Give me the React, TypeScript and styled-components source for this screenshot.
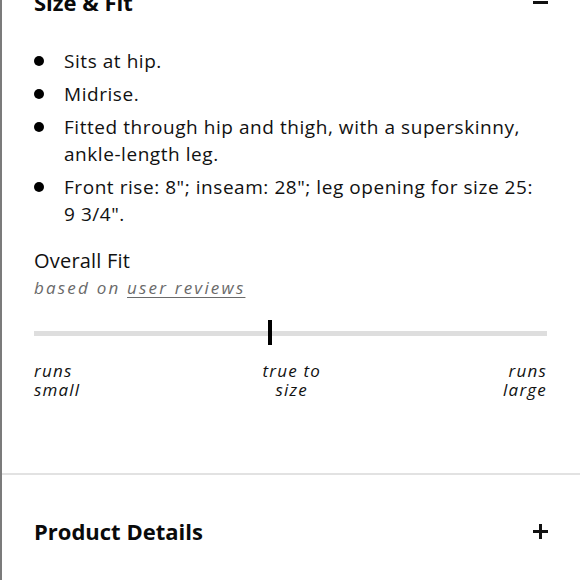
import React from "react";
import styled, { createGlobalStyle } from "styled-components";

const Global = createGlobalStyle`
  html, body { margin: 0; padding: 0; background: #fff; }
  body { font-family: "Open Sans", "Noto Sans", sans-serif; color: #111; overflow: hidden; }
`;

const Frame = styled.div`
  border-left: 2px solid #7b7b7b;
  min-height: 620px;
  margin-top: -21px;
  box-sizing: border-box;
`;

const Section = styled.section`
  padding: 0;
`;

const Header = styled.div`
  display: flex;
  align-items: center;
  justify-content: space-between;
  padding: 0 32px 0 32px;
  height: 46px;
`;

const Title = styled.h2`
  margin: 0;
  font-size: 22px;
  font-weight: 700;
  letter-spacing: 0;
  color: #0a0a0a;
`;

const Toggle = styled.span`
  position: relative;
  width: 15px;
  height: 15px;
  display: inline-block;
`;

const Bar = styled.span<{ $vertical?: boolean }>`
  position: absolute;
  background: #111;
  ${(p) =>
    p.$vertical
      ? "left: 6px; top: 0; width: 3px; height: 15px;"
      : "left: 0; top: 6px; width: 15px; height: 3px;"}
`;

const List = styled.ul`
  list-style: none;
  margin: 23px 0 0 0;
  padding: 0 36px 0 32px;
  display: flex;
  flex-direction: column;
  gap: 6px;
`;

const Item = styled.li`
  position: relative;
  padding-left: 30px;
  font-size: 19px;
  line-height: 27px;
  letter-spacing: 0.55px;
  color: #111;
  &::before {
    content: "";
    position: absolute;
    left: 0;
    top: 8px;
    width: 10px;
    height: 10px;
    border-radius: 50%;
    background: #000;
  }
`;

const FitBlock = styled.div`
  padding: 0 33px 0 32px;
  margin-top: 18px;
`;

const FitTitle = styled.div`
  font-size: 20px;
  line-height: 29px;
  letter-spacing: 0.2px;
  color: #111;
`;

const FitSub = styled.div`
  font-size: 17px;
  line-height: 26px;
  font-style: italic;
  letter-spacing: 2.2px;
  color: #6a6a6a;
  a {
    color: #6a6a6a;
    text-decoration: underline;
    text-underline-offset: 3px;
  }
`;

const Track = styled.div`
  position: relative;
  margin-top: 30px;
  height: 5px;
  background: #dedede;
`;

const Marker = styled.span`
  position: absolute;
  top: -11px;
  width: 4px;
  height: 25px;
  background: #000;
  transform: translateX(-50%);
`;

const Labels = styled.div`
  display: flex;
  justify-content: space-between;
  margin-top: 25px;
`;

const Label = styled.div<{ $align: "left" | "center" | "right" }>`
  font-size: 17px;
  line-height: 19px;
  font-style: italic;
  letter-spacing: 1.2px;
  color: #111;
  text-align: ${(p) => p.$align};
`;

const Divider = styled.hr`
  border: none;
  border-top: 2px solid #e2e2e2;
  margin: 74px 0 0 0;
`;

const DetailsHeader = styled(Header)`
  height: auto;
  padding-top: 41px;
`;

export default function App() {
  const bullets = [
    "Sits at hip.",
    "Midrise.",
    "Fitted through hip and thigh, with a superskinny, ankle-length leg.",
    "Front rise: 8\"; inseam: 28\"; leg opening for size 25: 9 3/4\".",
  ];
  const fitPosition = 46;
  return (
    <>
      <Global />
      <Frame>
        <Section>
          <Header>
            <Title>Size &amp; Fit</Title>
            <Toggle>
              <Bar />
            </Toggle>
          </Header>
          <List>
            {bullets.map((b) => (
              <Item key={b}>{b}</Item>
            ))}
          </List>
          <FitBlock>
            <FitTitle>Overall Fit</FitTitle>
            <FitSub>
              based on <a href="#reviews">user reviews</a>
            </FitSub>
            <Track>
              <Marker style={{ left: `${fitPosition}%` }} />
            </Track>
            <Labels>
              <Label $align="left">runs<br />small</Label>
              <Label $align="center">true to<br />size</Label>
              <Label $align="right">runs<br />large</Label>
            </Labels>
          </FitBlock>
        </Section>
        <Divider />
        <DetailsHeader>
          <Title>Product Details</Title>
          <Toggle>
            <Bar />
            <Bar $vertical />
          </Toggle>
        </DetailsHeader>
      </Frame>
    </>
  );
}
